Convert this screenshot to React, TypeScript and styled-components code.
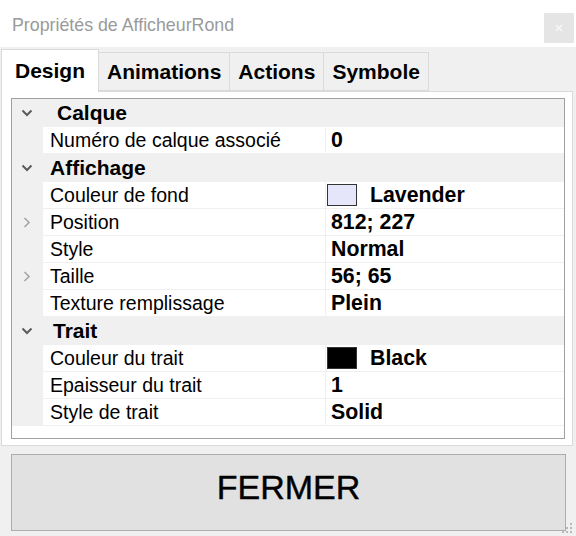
import React from 'react';
import styled, { createGlobalStyle } from 'styled-components';

type Prop = {
  label: string;
  value: string;
  swatch?: string;
  expandable?: boolean;
};

type Category = {
  title: string;
  indent: number;
  props: Prop[];
};

const categories: Category[] = [
  {
    title: 'Calque',
    indent: 14,
    props: [{ label: 'Numéro de calque associé', value: '0' }],
  },
  {
    title: 'Affichage',
    indent: 7,
    props: [
      { label: 'Couleur de fond', value: 'Lavender', swatch: '#e6e6fa' },
      { label: 'Position', value: '812; 227', expandable: true },
      { label: 'Style', value: 'Normal' },
      { label: 'Taille', value: '56; 65', expandable: true },
      { label: 'Texture remplissage', value: 'Plein' },
    ],
  },
  {
    title: 'Trait',
    indent: 10,
    props: [
      { label: 'Couleur du trait', value: 'Black', swatch: '#000000' },
      { label: 'Epaisseur du trait', value: '1' },
      { label: 'Style de trait', value: 'Solid' },
    ],
  },
];

const tabs = ['Design', 'Animations', 'Actions', 'Symbole'];

const Global = createGlobalStyle`
  body {
    margin: 0;
    background: #f0f0f0;
    font-family: "Liberation Sans", Arial, sans-serif;
  }
`;

const ChevronDown = () => (
  <svg width="12" height="8" viewBox="0 0 12 8">
    <polyline points="1.5,1.5 6,6 10.5,1.5" fill="none" stroke="#5c5c5c" strokeWidth="2" />
  </svg>
);

const ChevronRight = () => (
  <svg width="8" height="11" viewBox="0 0 8 11">
    <polyline points="1.5,1 6,5.5 1.5,10" fill="none" stroke="#a6a6a6" strokeWidth="1.6" />
  </svg>
);

export default function App() {
  return (
    <S.Window>
      <Global />
      <S.TitleBar>
        <S.Title>Propriétés de AfficheurRond</S.Title>
        <S.Close>
          <svg width="8" height="8" viewBox="0 0 8 8">
            <path d="M1 1 L7 7 M7 1 L1 7" stroke="#f7f7f7" strokeWidth="1.6" />
          </svg>
        </S.Close>
      </S.TitleBar>

      <S.TabStrip>
        {tabs.map((t, i) => (
          <S.Tab key={t} $active={i === 0}>
            {t}
          </S.Tab>
        ))}
      </S.TabStrip>

      <S.Page>
        <S.Grid>
          {categories.map((cat) => (
            <React.Fragment key={cat.title}>
              <S.CategoryRow>
                <S.Margin>
                  <ChevronDown />
                </S.Margin>
                <S.CategoryTitle $indent={cat.indent}>{cat.title}</S.CategoryTitle>
              </S.CategoryRow>
              {cat.props.map((p) => (
                <S.PropRow key={p.label}>
                  <S.Margin>{p.expandable && <ChevronRight />}</S.Margin>
                  <S.Label>{p.label}</S.Label>
                  <S.Value>
                    {p.swatch && <S.Swatch $color={p.swatch} />}
                    {p.value}
                  </S.Value>
                </S.PropRow>
              ))}
            </React.Fragment>
          ))}
        </S.Grid>
      </S.Page>

      <S.Button>FERMER</S.Button>

      <S.Grip>
        <svg width="11" height="11" viewBox="0 0 11 11" fill="#b8b8b8">
          <rect x="8" y="0" width="2" height="2" />
          <rect x="4" y="4" width="2" height="2" />
          <rect x="8" y="4" width="2" height="2" />
          <rect x="0" y="8" width="2" height="2" />
          <rect x="4" y="8" width="2" height="2" />
          <rect x="8" y="8" width="2" height="2" />
        </svg>
      </S.Grip>
    </S.Window>
  );
}

const S = {
  Window: styled.div`
    position: relative;
    width: 576px;
    height: 536px;
    background: #f0f0f0;
    display: flex;
    flex-direction: column;
    overflow: hidden;
  `,
  TitleBar: styled.div`
    height: 47px;
    flex-shrink: 0;
    background: #ffffff;
    display: flex;
    align-items: flex-start;
    justify-content: space-between;
  `,
  Title: styled.div`
    padding: 15px 0 0 12px;
    font-size: 17.8px;
    color: #9a9a9a;
    line-height: 20px;
  `,
  Close: styled.div`
    margin: 13px 2px 0 0;
    width: 30px;
    height: 30px;
    background: #e5e5e5;
    display: flex;
    align-items: center;
    justify-content: center;
  `,
  TabStrip: styled.div`
    margin-top: 2px;
    padding-left: 1px;
    height: 43px;
    display: flex;
    align-items: flex-start;
  `,
  Tab: styled.div<{ $active?: boolean }>`
    position: relative;
    z-index: 1;
    box-sizing: border-box;
    height: ${(p) => (p.$active ? '43px' : '39px')};
    margin-top: ${(p) => (p.$active ? '0' : '3px')};
    padding: 0 ${(p) => (p.$active ? '13px' : '8px')};
    display: flex;
    align-items: center;
    background: ${(p) => (p.$active ? '#ffffff' : '#f0f0f0')};
    border: 1px solid #dadada;
    border-bottom: ${(p) => (p.$active ? 'none' : '1px solid #dadada')};
    margin-left: ${(p) => (p.$active ? '0' : '-1px')};
    font-size: 21px;
    font-weight: bold;
    color: #000;
  `,
  Page: styled.div`
    margin: -1px 3px 0 1px;
    box-sizing: border-box;
    height: 355px;
    padding: 6px 7px 5px 9px;
    background: #ffffff;
    border: 1px solid #dadada;
  `,
  Grid: styled.div`
    box-sizing: border-box;
    height: 341px;
    border: 1px solid #a0a0a0;
    background: #ffffff;
  `,
  CategoryRow: styled.div`
    height: 28px;
    display: flex;
    align-items: center;
    background: #f0f0f0;
  `,
  PropRow: styled.div`
    height: 27px;
    display: flex;
    box-sizing: border-box;
    border-bottom: 1px solid #f0f0f0;
    background: #ffffff;
  `,
  Margin: styled.div`
    width: 31px;
    flex-shrink: 0;
    align-self: stretch;
    background: #f0f0f0;
    display: flex;
    align-items: center;
    justify-content: center;
    padding-right: 1px;
    box-sizing: border-box;
  `,
  CategoryTitle: styled.div<{ $indent: number }>`
    padding-left: ${(p) => p.$indent}px;
    font-size: 21px;
    font-weight: bold;
    color: #000;
  `,
  Label: styled.div`
    width: 283px;
    flex-shrink: 0;
    box-sizing: border-box;
    padding-left: 7px;
    border-right: 1px solid #f0f0f0;
    display: flex;
    align-items: center;
    font-size: 19.5px;
    color: #000;
    white-space: nowrap;
  `,
  Value: styled.div`
    flex: 1;
    padding-left: 5px;
    display: flex;
    align-items: center;
    font-size: 21.3px;
    font-weight: bold;
    color: #000;
  `,
  Swatch: styled.span<{ $color: string }>`
    box-sizing: border-box;
    width: 30px;
    height: 22px;
    margin: 0 13px 0 -4px;
    background: ${(p) => p.$color};
    border: 1px solid #333333;
  `,
  Button: styled.div`
    margin: 8px 10px 0 11px;
    height: 77px;
    box-sizing: border-box;
    padding-bottom: 10px;
    background: #e1e1e1;
    border: 1px solid #adadad;
    display: flex;
    align-items: center;
    justify-content: center;
    font-size: 34px;
    color: #000;
    -webkit-text-stroke: 0.4px #000;
  `,
  Grip: styled.div`
    position: absolute;
    right: 3px;
    bottom: 2px;
    line-height: 0;
  `,
};
